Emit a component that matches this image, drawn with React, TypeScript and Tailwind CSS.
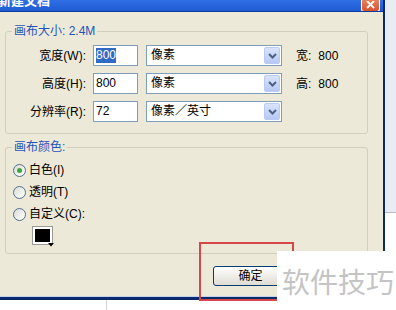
import React from "react";

function Chevron() {
  return (
    <svg width="9" height="6" viewBox="0 0 9 6" className="block">
      <path d="M1 1 L4.5 4.5 L8 1" fill="none" stroke="#4d6185" strokeWidth="2" />
    </svg>
  );
}

function Select({ text }: { text: string }) {
  return (
    <div className="ml-[8px] flex h-[21px] w-[136px] items-center border border-[#7f9db9] bg-white p-[1px]">
      <span className="flex-1 pl-[3px] leading-[17px]">{text}</span>
      <div className="flex h-[17px] w-[16px] items-center justify-center rounded-[2px] border border-[#b9cbf3] bg-linear-to-b from-[#d9e4fb] to-[#b6c9f4]">
        <Chevron />
      </div>
    </div>
  );
}

function Row({
  label,
  value,
  unit,
  extra,
  selected,
}: {
  label: string;
  value: string;
  unit: string;
  extra?: string;
  selected?: boolean;
}) {
  return (
    <div className="flex h-[21px] items-center">
      <span className="w-[80px] text-right leading-[14px]">{label}</span>
      <div className="ml-[7px] flex h-[21px] w-[45px] items-center border border-[#7f9db9] bg-white pl-[2px]">
        {selected ? (
          <span className="bg-[#316ac5] leading-[15px] text-white">{value}</span>
        ) : (
          <span className="leading-[15px]">{value}</span>
        )}
      </div>
      <Select text={unit} />
      {extra ? (
        <span className="ml-[14px] leading-[14px]">
          {extra.split(" ")[0]}
          <span className="ml-[7px]">{extra.split(" ")[1]}</span>
        </span>
      ) : null}
    </div>
  );
}

function Radio({ label, checked }: { label: string; checked?: boolean }) {
  return (
    <div className="flex h-[22px] items-center">
      <div className="ml-[7px] flex h-[13px] w-[13px] items-center justify-center rounded-full border border-[#55708c] bg-linear-to-br from-[#dcdcd4] to-white">
        {checked ? <div className="h-[5px] w-[5px] rounded-full bg-[#3ba83b]" /> : null}
      </div>
      <span className="ml-[3px] leading-[14px]">{label}</span>
    </div>
  );
}

export default function App() {
  return (
    <div className="relative h-[310px] w-[396px] overflow-hidden bg-white font-['Liberation_Sans','Noto_Sans_CJK_SC',sans-serif] text-[12px] text-black">
      <div className="flex h-[297px]">
        <div className="flex w-[383px] flex-col">
          <div className="flex h-[12px] items-start overflow-hidden border-b border-[#0c3a9c] bg-linear-to-b from-[#2f6fe6] to-[#1f5ad2]">
            <span className="-ml-[2px] -mt-[6px] text-[13px] font-bold leading-[14px] text-white">新建文档</span>
            <div className="ml-auto mr-[3px] flex h-[12px] w-[19px] items-center justify-center rounded-b-[3px] border border-t-0 border-white bg-linear-to-b from-[#e8805a] to-[#d7502a]">
              <svg width="9" height="8" viewBox="0 0 9 8" className="-mt-[2px] block">
                <path d="M1 0 L8 7 M8 0 L1 7" stroke="white" strokeWidth="1.8" />
              </svg>
            </div>
          </div>
          <div className="flex flex-1 flex-col border-b border-[#c5d3ef] bg-[#ece9d8] pl-[5px] pr-[15px] pt-[12px]">
            <fieldset className="rounded-[3px] border border-[#d0d0bf] pb-[11px]">
              <legend className="ml-[6px] px-[2px] leading-[14px] text-[#1f55b8]">画布大小: 2.4M</legend>
              <div className="mt-[7px] flex flex-col gap-[7px]">
                <Row label="宽度(W):" value="800" unit="像素" extra="宽: 800" selected />
                <Row label="高度(H):" value="800" unit="像素" extra="高: 800" />
                <Row label="分辨率(R):" value="72" unit="像素／英寸" />
              </div>
            </fieldset>
            <fieldset className="mt-[6px] rounded-[3px] border border-[#d0d0bf] pb-[8px]">
              <legend className="ml-[6px] px-[2px] leading-[14px] text-[#1f55b8]">画布颜色:</legend>
              <div className="mt-[5px] flex flex-col">
                <Radio label="白色(I)" checked />
                <Radio label="透明(T)" />
                <Radio label="自定义(C):" />
                <div className="ml-[26px] mt-[1px] flex">
                  <div className="relative h-[19px] w-[21px] border border-[#9c9a94] bg-white p-[2px]">
                    <div className="h-full w-full bg-black" />
                    <svg width="6" height="4" viewBox="0 0 6 4" className="absolute -bottom-[3px] -right-[2px] block">
                      <path d="M0 0 L6 0 L3 3.5 Z" fill="#000" />
                    </svg>
                  </div>
                </div>
              </div>
            </fieldset>
            <div className="mt-[12px] flex pl-[208px]">
              <button className="flex h-[20px] w-[75px] items-center justify-center rounded-[3px] border border-[#003c74] bg-linear-to-b from-white to-[#dedcd2] leading-[14px]">
                确定
              </button>
            </div>
          </div>
        </div>
        <div className="w-[2px] bg-[#0b2a6e]" />
        <div className="flex flex-1 flex-col">
          <div className="h-[212px] bg-[#e9ecf2]" />
          <div className="h-px bg-[#b8bcc4]" />
          <div className="flex-1 bg-white" />
        </div>
      </div>
      <div className="h-[3px] w-[385px] bg-[#0b2a6e]" />
      <div className="flex h-[10px]">
        <div className="ml-[106px] w-px bg-[#d4d4d4]" />
      </div>
      <div className="absolute left-[199px] top-[242px] h-[59px] w-[95px] border-2 border-[#d64848]" />
      <div className="absolute bottom-0 left-[277px] right-0 top-[251px] flex items-center bg-white pl-[5px]">
        <span className="font-['Noto_Sans_CJK_SC',sans-serif] text-[28px] font-normal leading-[30px] text-[#c4c4c4]">软件技巧</span>
      </div>
    </div>
  );
}
